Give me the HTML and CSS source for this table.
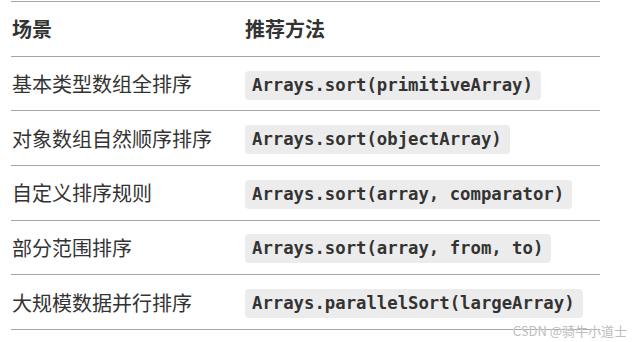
FILE: index.html
```html
<!DOCTYPE html>
<html lang="zh">
<head>
<meta charset="utf-8">
<link rel="stylesheet" href="styles.css">
</head>
<body>
<div class="page">
  <table class="tbl">
    <thead>
      <tr><th>场景</th><th>推荐方法</th></tr>
    </thead>
    <tbody>
      <tr><td>基本类型数组全排序</td><td><code>Arrays.sort(primitiveArray)</code></td></tr>
      <tr><td>对象数组自然顺序排序</td><td><code>Arrays.sort(objectArray)</code></td></tr>
      <tr><td>自定义排序规则</td><td><code>Arrays.sort(array, comparator)</code></td></tr>
      <tr><td>部分范围排序</td><td><code>Arrays.sort(array, from, to)</code></td></tr>
      <tr><td>大规模数据并行排序</td><td><code>Arrays.parallelSort(largeArray)</code></td></tr>
    </tbody>
  </table>
  <div class="wm">CSDN @骑牛小道士</div>
</div>
</body>
</html>
```
FILE: styles.css
```css
html, body {
  margin: 0;
  padding: 0;
  background: #fff;
}
.page {
  position: relative;
  width: 632px;
  height: 342px;
  overflow: hidden;
  padding-top: 1px;
  box-sizing: border-box;
}
.tbl {
  margin-left: 11px;
  width: 589px;
  border-collapse: collapse;
  font-family: "Noto Sans CJK SC", "Noto Sans", sans-serif;
  color: #333;
  font-size: 20px;
}
.tbl th, .tbl td {
  text-align: left;
  padding: 0 0 0 1px;
  height: 53.66px;
  border-bottom: 1px solid #a6a6a6;
  vertical-align: middle;
  white-space: nowrap;
}
.tbl thead th {
  border-top: 1px solid #a6a6a6;
  font-weight: 700;
}
.tbl th:first-child, .tbl td:first-child {
  width: 233px;
}
.tbl td:last-child,
.tbl th:last-child {
  padding-left: 0;
}
code {
  display: inline-block;
  vertical-align: middle;
  font-family: "DejaVu Sans Mono", "Liberation Mono", monospace;
  font-weight: 700;
  font-size: 17.3px;
  line-height: 29px;
  padding: 0 8px 0 7px;
  background: #ececec;
  border-radius: 4px;
  color: #333;
}
.wm {
  position: absolute;
  right: 5px;
  bottom: 2px;
  font-family: "Noto Sans CJK SC", sans-serif;
  font-size: 13px;
  color: #bdbdbd;
  text-shadow: 0 0 1px #fff;
}
```
